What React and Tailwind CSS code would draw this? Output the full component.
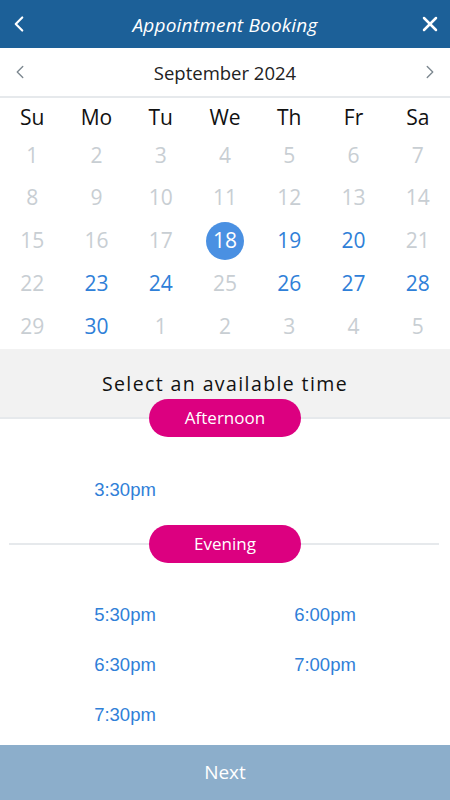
import { ChevronLeft, ChevronRight, X } from "lucide-react";

const weeks = [
  [1, 2, 3, 4, 5, 6, 7],
  [8, 9, 10, 11, 12, 13, 14],
  [15, 16, 17, 18, 19, 20, 21],
  [22, 23, 24, 25, 26, 27, 28],
  [29, 30, 1, 2, 3, 4, 5],
];
const available = [19, 20, 23, 24, 26, 27, 28, 30];

function Pill({ label }) {
  return (
    <div className="w-[152px] h-[38px] rounded-full bg-[#dc0080] text-white text-[17px] flex items-center justify-center">
      {label}
    </div>
  );
}

export default function App() {
  return (
    <div className="w-[450px] h-[800px] flex flex-col bg-white font-['Open_Sans',sans-serif] overflow-hidden">
      <header className="h-[48px] bg-[#1c6098] text-white flex items-center justify-between px-[6px]">
        <ChevronLeft size={26} strokeWidth={2} />
        <h1 className="italic text-[19px] tracking-[0.2px] pt-[3px]">Appointment Booking</h1>
        <X size={24} strokeWidth={2.5} className="mr-[2px]" />
      </header>

      <div className="h-[50px] flex items-center justify-between px-[9px] border-b-2 border-[#e6e9ec]">
        <ChevronLeft size={22} strokeWidth={1.5} className="text-[#7d8890]" />
        <span className="text-[18.5px] text-[#222] pt-[2px]">September 2024</span>
        <ChevronRight size={22} strokeWidth={1.5} className="text-[#7d8890]" />
      </div>

      <div className="grid grid-cols-7 text-center text-[21px] text-[#111] h-[40px] items-center">
        {["Su", "Mo", "Tu", "We", "Th", "Fr", "Sa"].map((d) => (
          <span key={d}>{d}</span>
        ))}
      </div>

      <div className="flex flex-col -mt-[4px]">
        {weeks.map((w, wi) => (
          <div key={wi} className="grid grid-cols-7 h-[42.75px] items-center text-center text-[21px]">
            {w.map((n, i) => {
              const inMonth = !(wi === 4 && n < 10);
              const selected = inMonth && n === 18;
              const open = inMonth && available.includes(n);
              return (
                <div key={i} className="flex items-center justify-center">
                  {selected ? (
                    <span className="w-[38px] h-[38px] rounded-full bg-[#4a90e2] text-white flex items-center justify-center">
                      {n}
                    </span>
                  ) : (
                    <span className={open ? "text-[#2f80d8]" : "text-[#c8ced3]"}>{n}</span>
                  )}
                </div>
              );
            })}
          </div>
        ))}
      </div>

      <div className="mt-[1px] h-[70px] bg-[#f2f2f2] border-b-2 border-[#e6e9ec] flex justify-center pt-[20px]">
        <span className="text-[19.5px] tracking-[1.4px] text-[#111]">Select an available time</span>
      </div>

      <div className="flex justify-center -mt-[20px]">
        <Pill label="Afternoon" />
      </div>

      <div className="grid grid-cols-2 px-[25px] pt-[41px] font-['Liberation_Sans',Arial,sans-serif] text-[18.5px] leading-[24px] text-[#2f80d8] text-center">
        <span>3:30pm</span>
      </div>

      <div className="relative flex justify-center mt-[23px] px-[9px]">
        <div className="absolute left-[9px] right-[11px] top-[18px] h-[2px] bg-[#e6e9ec]" />
        <div className="relative">
          <Pill label="Evening" />
        </div>
      </div>

      <div className="grid grid-cols-2 auto-rows-[50px] px-[25px] pt-[27px] font-['Liberation_Sans',Arial,sans-serif] text-[18.5px] leading-[50px] text-[#2f80d8] text-center">
        <span>5:30pm</span>
        <span>6:00pm</span>
        <span>6:30pm</span>
        <span>7:00pm</span>
        <span>7:30pm</span>
      </div>

      <div className="mt-auto h-[55px] bg-[#8caecb] text-white text-[19px] flex items-center justify-center">
        Next
      </div>
    </div>
  );
}
